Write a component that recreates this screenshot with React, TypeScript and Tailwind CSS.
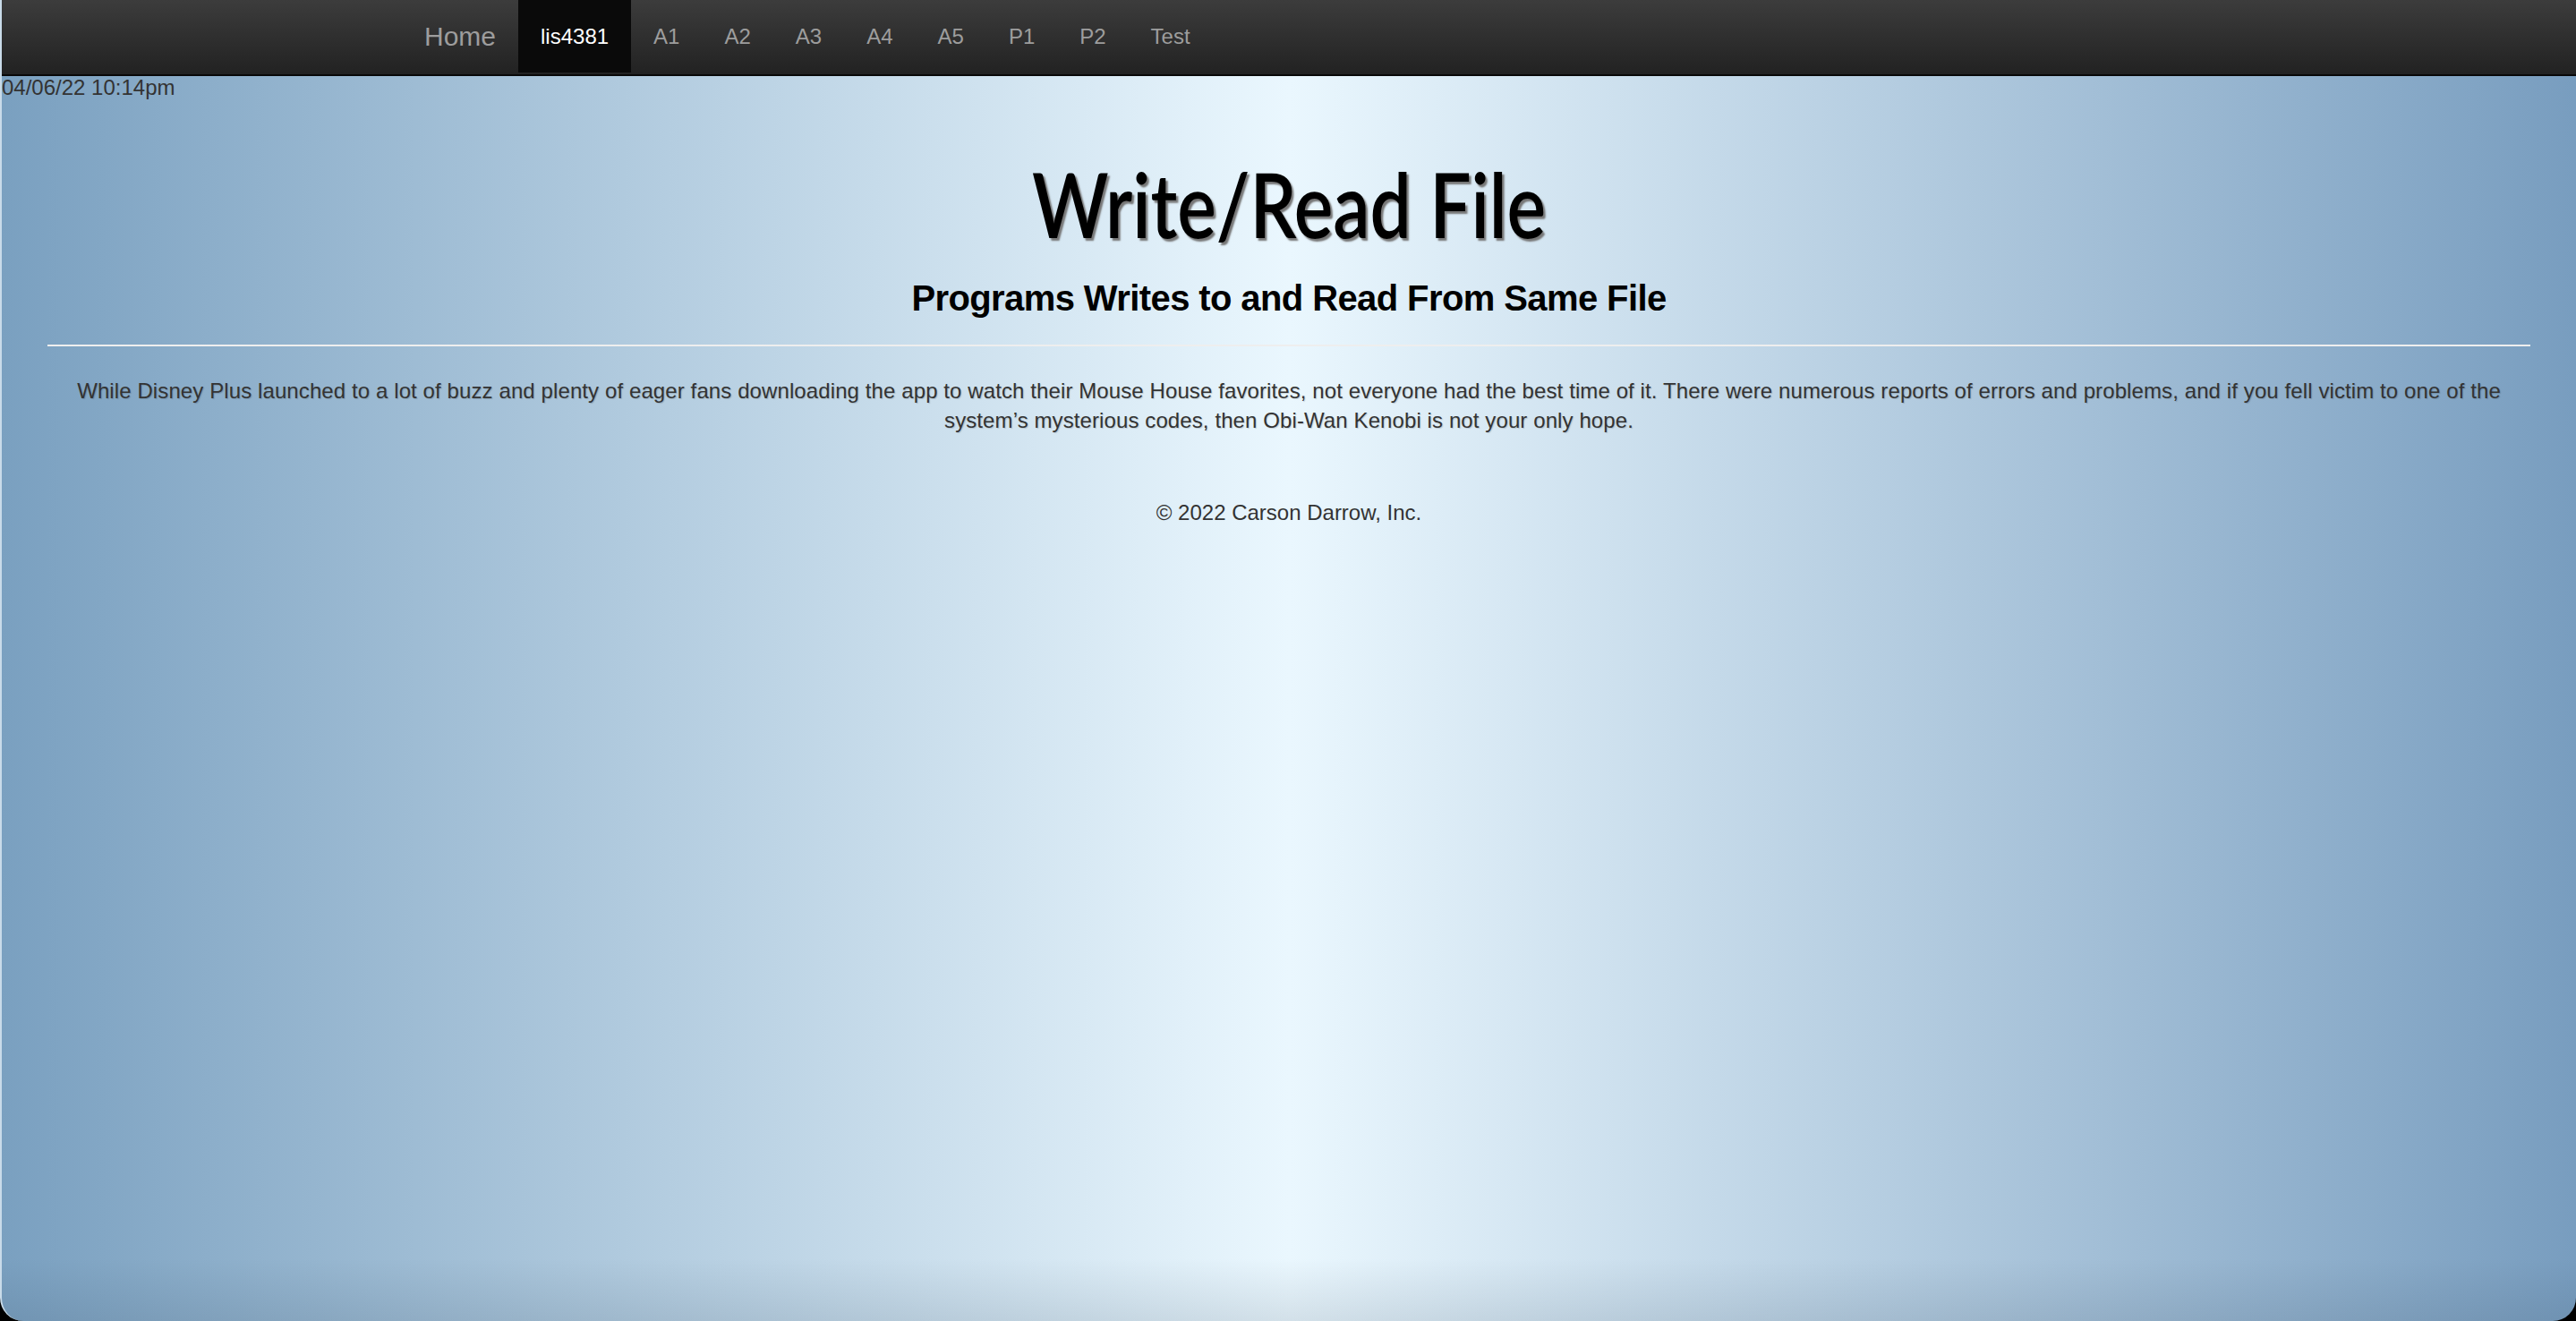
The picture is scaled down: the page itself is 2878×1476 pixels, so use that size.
export default function App() {
  const links = ['A1', 'A2', 'A3', 'A4', 'A5', 'P1', 'P2', 'Test']

  return (
    <div className="min-h-[1476px] w-full bg-black">
      <div className="relative flex h-[1476px] flex-col overflow-hidden rounded-b-[26px] border-l-2 border-[#c9dbe9] bg-[linear-gradient(to_right,#7aa0c0_0%,#eaf7fe_50%,#789dbf_100%)] font-['Liberation_Sans',Arial,sans-serif]">
        {/* navbar */}
        <nav className="flex h-[85px] shrink-0 items-stretch border-b-2 border-[#080808] bg-[linear-gradient(to_bottom,#3c3c3c,#222222)] pb-[2px] pl-[447px]">
          <span className="flex items-center px-[25px] text-[30px] text-[#9d9d9d]">Home</span>
          <span className="flex items-center bg-[#0a0a0a] px-[25px] text-[24px] text-white">lis4381</span>
          {links.map((l) => (
            <span key={l} className="flex items-center px-[25px] text-[24px] text-[#9d9d9d]">
              {l}
            </span>
          ))}
        </nav>

        <div className="mt-[1px] text-[24px] leading-[24px] text-[#333]">04/06/22 10:14pm</div>

        <div className="px-[51px] text-center">
          <h1 className="mt-[61px] font-['Lato',sans-serif] text-[100px] leading-[112px] font-semibold text-black">
            <span className="inline-block scale-x-[0.82] [text-shadow:3px_3px_2px_#777]">Write/Read File</span>
          </h1>
          <h2 className="mt-[26px] text-[40px] leading-[48px] font-bold tracking-[-0.6px] text-black">
            Programs Writes to and Read From Same File
          </h2>
          <hr className="mt-[28px] border-t-2 border-[#eeeeee]" />
          <p className="mt-[33px] px-[30px] text-[24px] leading-[33px] tracking-[0.1px] text-[#333] [text-shadow:1px_1px_1px_rgba(0,0,0,0.15)]">
            While Disney Plus launched to a lot of buzz and plenty of eager fans downloading the app to watch their Mouse House favorites, not everyone had the best time of it. There were numerous reports of errors and problems, and if you fell victim to one of the system’s mysterious codes, then Obi-Wan Kenobi is not your only hope.
          </p>
          <footer className="mt-[70px] text-[24px] leading-[33px] text-[#333]">© 2022 Carson Darrow, Inc.</footer>
        </div>

        <div className="pointer-events-none absolute inset-x-0 bottom-0 h-[70px] bg-[linear-gradient(to_bottom,rgba(0,0,0,0),rgba(40,60,80,0.12))]" />
      </div>
    </div>
  )
}
